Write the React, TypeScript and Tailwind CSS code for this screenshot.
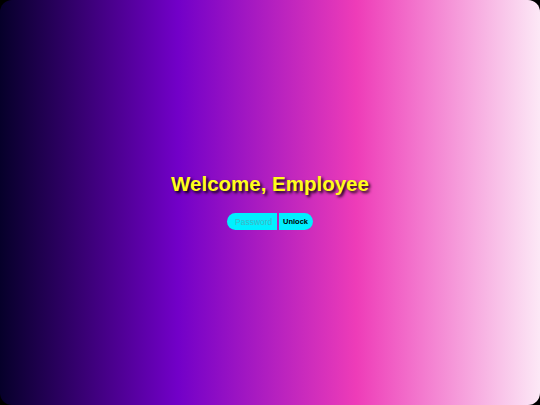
export default function App() {
  return (
    <div className="h-[405px] w-[540px] bg-black">
      <div
        className="flex h-full w-full flex-col items-center justify-center rounded-[12px] bg-[linear-gradient(to_right,#06002a_0%,#7200c8_33%,#ee3cb8_66%,#fce8f6_100%)] font-['Liberation_Sans',Arial,sans-serif]"
      >
        <h1 className="mt-[-1px] text-[20.5px] font-bold leading-none text-[#ffff1a] [text-shadow:2px_2px_3px_rgba(0,0,0,0.95)]">
          Welcome, Employee
        </h1>
        <div className="mt-[19px] flex items-center gap-[2px]">
          <input
            type="password"
            placeholder="Password"
            className="h-[17px] w-[50px] rounded-l-full bg-[#00f0ff] pl-[8px] pr-[2px] text-[8.5px] text-black outline-none placeholder:text-[#44b4c4]"
          />
          <button className="h-[17px] w-[34px] rounded-r-full bg-[#00f0ff] pr-[1px] text-[7.5px] font-bold text-black">
            Unlock
          </button>
        </div>
      </div>
    </div>
  );
}
